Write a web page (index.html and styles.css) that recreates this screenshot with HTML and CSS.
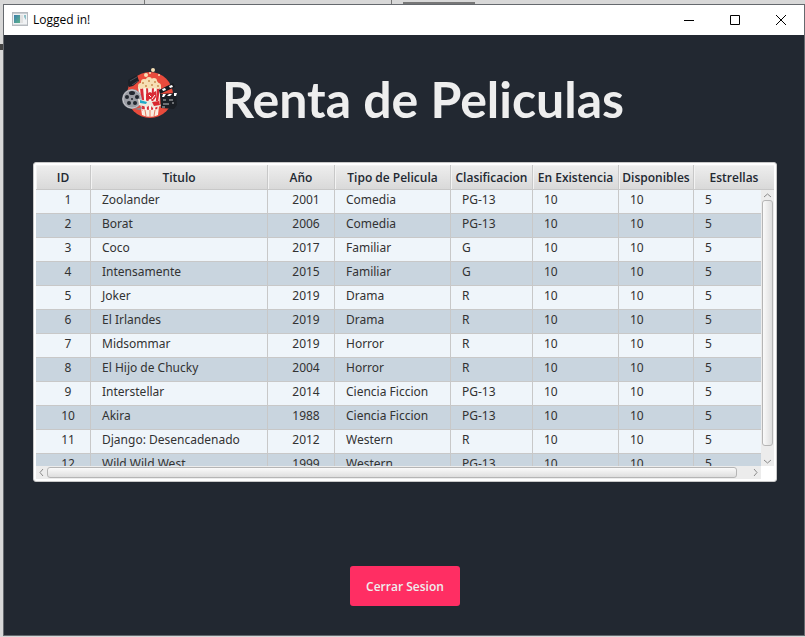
FILE: index.html
```html
<!DOCTYPE html>
<html lang="es">
<head>
<meta charset="utf-8">
<title>Logged in!</title>
<link rel="stylesheet" href="styles.css">
</head>
<body>
<div class="window">
  <header class="titlebar">
    <svg class="app-icon" width="16" height="14" viewBox="0 0 16 14" aria-hidden="true">
      <defs><linearGradient id="pane" x1="0" y1="0" x2="1" y2="1"><stop offset="0" stop-color="#3d7fae"/><stop offset="1" stop-color="#5db28a"/></linearGradient></defs>
      <rect x=".5" y=".5" width="15" height="13" fill="#f0f2f4" stroke="#b5babf"/>
      <rect x="1" y="1" width="14" height="1" fill="#c8ccd0"/>
      <rect x="2" y="3" width="6" height="8" fill="url(#pane)"/>
      <rect x="8" y="3" width="3" height="8" fill="#e1e1e1"/>
      <path d="M12 3h2v5l-2-3z" fill="#8fc0c8"/>
      <rect x="1" y="12" width="14" height="1" fill="#d5d8db"/>
    </svg>
    <span class="caption">Logged in!</span>
    <div class="window-buttons">
      <button type="button" aria-label="Minimizar"><svg width="12" height="12" viewBox="0 0 12 12"><path d="M1 6.500h10"/></svg></button>
      <button type="button" aria-label="Maximizar"><svg width="12" height="12" viewBox="0 0 12 12"><path d="M1.500 1.500h9v9h-9z"/></svg></button>
      <button type="button" aria-label="Cerrar"><svg width="12" height="12" viewBox="0 0 12 12"><path d="M1 1l10 10M11 1L1 11"/></svg></button>
    </div>
  </header>
  <main class="content">
    <div class="brand">
      <svg class="logo" width="56" height="52" viewBox="0 0 56 52" aria-hidden="true">
        <circle cx="28" cy="28" r="23" fill="#e84b3c"/>
        <path d="M6 13l9-5 2 6-6 5-4 1-1-4z" fill="#1b2027"/>
        <path d="M8 14l7-4M10 18l6-4" stroke="#4b5058"/>
        <path d="M16 20h23l-3 28q-8 3-16 0z" fill="#fbf6ee"/>
        <path d="M18 20h3l2 24h-3zM24 20h2l1 24h-2zM30 20h2l-1 24h-2zM35 20h3l-3 24h-2z" fill="#d92b36"/>
        <path d="M20 42l8 1 8-1-1 6q-7 3-14 0z" fill="#f8eee0"/>
        <path d="M23 43l1 6M28 43v7M33 43l-1 6" stroke="#e9785f"/>
        <g fill="#f6dfb5">
          <circle cx="19" cy="19" r="3"/><circle cx="22" cy="15" r="3"/><circle cx="27" cy="13" r="3"/><circle cx="32" cy="14" r="3"/><circle cx="36" cy="19" r="3"/><path d="M17 20q2-9 11-8t11 8q-11 3-22 0z"/>
          <circle cx="31" cy="3" r="2"/><circle cx="24" cy="8" r="2"/><circle cx="37" cy="8" r="1"/><circle cx="28" cy="6" r="1"/>
        </g>
        <g fill="#c98f52"><circle cx="21" cy="16" r="1"/><circle cx="27" cy="14" r="1"/><circle cx="33" cy="15" r="1"/><circle cx="30" cy="18" r="1"/><circle cx="24" cy="19" r="1"/><circle cx="36" cy="19" r="1"/></g>
        <path d="M24 27l4-2 2 1 4-2v6l-2 3-4-1-4 2z" fill="#d92b36"/>
        <path d="M27 28l2 2M33 28l-3 4" stroke="#fff"/>
        <circle cx="10" cy="32" r="10" fill="#9b9da4"/>
        <circle cx="10" cy="32" r="9" fill="none" stroke="#c5c6cb"/>
        <g fill="#22272f"><ellipse cx="10" cy="26" rx="3" ry="2"/><circle cx="15" cy="30" r="2"/><circle cx="13" cy="36" r="2"/><circle cx="7" cy="36" r="2"/><circle cx="5" cy="30" r="2"/><circle cx="10" cy="32" r="1"/></g>
        <path d="M12 42l9-2-3 3z" fill="#888a90"/>
        <path d="M16 32l10 2 11 0 2 5-8 2-3-3-3 2-8-2z" fill="#eee8dd"/>
        <path d="M18 33l7 2-1 2-6-1z" fill="#20a9c8"/>
        <path d="M30 35l7-1 1 4-6 1z" fill="#d9272e"/>
        <path d="M38 27l16-1 1 12-3 4-13-1z" fill="#1b1f25"/>
        <path d="M37 23l14-7 2 4-15 7z" fill="#171b20"/>
        <path d="M40 22l3-1 1 2-3 1zM47 19l3-1 1 2-3 1zM41 27h3l-2 3h-2zM47 27h3l-2 2h-3zM52 26h3l-1 3h-2z" fill="#fff"/>
        <path d="M41 33h3M47 33h4M41 37h6M40 40h3M50 36h2" stroke="#bfc1c3"/>
      </svg>
      <h1>Renta de Peliculas</h1>
    </div>
    <div class="table-card">
      <div class="table-view">
        <table>
          <colgroup><col class="c-id"><col><col class="c-year"><col class="c-type"><col class="c-class"><col class="c-stock"><col class="c-free"><col class="c-stars"></colgroup>
          <thead><tr><th>ID</th><th>Titulo</th><th>Año</th><th>Tipo de Pelicula</th><th>Clasificacion</th><th>En Existencia</th><th>Disponibles</th><th>Estrellas</th></tr></thead>
          <tbody>
            <tr><td>1</td><td>Zoolander</td><td>2001</td><td>Comedia</td><td>PG-13</td><td>10</td><td>10</td><td>5</td></tr>
            <tr><td>2</td><td>Borat</td><td>2006</td><td>Comedia</td><td>PG-13</td><td>10</td><td>10</td><td>5</td></tr>
            <tr><td>3</td><td>Coco</td><td>2017</td><td>Familiar</td><td>G</td><td>10</td><td>10</td><td>5</td></tr>
            <tr><td>4</td><td>Intensamente</td><td>2015</td><td>Familiar</td><td>G</td><td>10</td><td>10</td><td>5</td></tr>
            <tr><td>5</td><td>Joker</td><td>2019</td><td>Drama</td><td>R</td><td>10</td><td>10</td><td>5</td></tr>
            <tr><td>6</td><td>El Irlandes</td><td>2019</td><td>Drama</td><td>R</td><td>10</td><td>10</td><td>5</td></tr>
            <tr><td>7</td><td>Midsommar</td><td>2019</td><td>Horror</td><td>R</td><td>10</td><td>10</td><td>5</td></tr>
            <tr><td>8</td><td>El Hijo de Chucky</td><td>2004</td><td>Horror</td><td>R</td><td>10</td><td>10</td><td>5</td></tr>
            <tr><td>9</td><td>Interstellar</td><td>2014</td><td>Ciencia Ficcion</td><td>PG-13</td><td>10</td><td>10</td><td>5</td></tr>
            <tr><td>10</td><td>Akira</td><td>1988</td><td>Ciencia Ficcion</td><td>PG-13</td><td>10</td><td>10</td><td>5</td></tr>
            <tr><td>11</td><td>Django: Desencadenado</td><td>2012</td><td>Western</td><td>R</td><td>10</td><td>10</td><td>5</td></tr>
            <tr><td>12</td><td>Wild Wild West</td><td>1999</td><td>Western</td><td>PG-13</td><td>10</td><td>10</td><td>5</td></tr>
          </tbody>
        </table>
      </div>
      <div class="scroll vertical">
        <button type="button" aria-label="Subir"><svg width="9" height="9" viewBox="0 0 9 9"><path d="M1 6l3.500-3L8 6"/></svg></button>
        <div class="thumb"></div>
        <button type="button" aria-label="Bajar"><svg width="9" height="9" viewBox="0 0 9 9"><path d="M1 3l3.500 3L8 3"/></svg></button>
      </div>
      <div class="scroll horizontal">
        <button type="button" aria-label="Izquierda"><svg width="9" height="9" viewBox="0 0 9 9"><path d="M6 1L3 4.500 6 8"/></svg></button>
        <div class="thumb"></div>
        <button type="button" aria-label="Derecha"><svg width="9" height="9" viewBox="0 0 9 9"><path d="M3 1l3 3.500L3 8"/></svg></button>
      </div>
    </div>
    <button type="button" class="logout">Cerrar Sesion</button>
  </main>
</div>
</body>
</html>
```
FILE: styles.css
```css
* { box-sizing: border-box; }

body {
  margin: 0;
  min-height: 100vh;
  padding: 4px 0 1px 3px;
  display: flex;
  font-family: "Open Sans", "Noto Sans", sans-serif;
  font-size: 12px;
  background:
    linear-gradient(#777, #777) 144px 0 / 1px 4px no-repeat,
    linear-gradient(#777, #777) 391px 0 / 1px 4px no-repeat,
    linear-gradient(#777, #777) 403px 2px / 72px 2px no-repeat,
    linear-gradient(#444, #444) 0 44px / 3px 6px no-repeat,
    #d8d8d8;
}

button {
  margin: 0;
  padding: 0;
  border: 0;
  background: none;
  font: inherit;
}

.window {
  flex: 1;
  min-width: 0;
  display: flex;
  flex-direction: column;
  border: 1px solid #65696e;
  background: #222831;
}

.titlebar {
  height: 30px;
  padding-left: 8px;
  display: flex;
  align-items: center;
  background: #fff;
}

.app-icon { margin-bottom: 2px; }

.caption {
  margin-left: 5px;
  line-height: 16px;
  color: #000;
}

.window-buttons {
  margin-left: auto;
  height: 100%;
  display: flex;
}

.window-buttons button {
  width: 46px;
  display: grid;
  place-items: center;
}

.window-buttons svg {
  fill: none;
  stroke: #000;
}

.content {
  flex: 1;
  padding: 32px 27px 29px 29px;
  display: flex;
  flex-direction: column;
}

.brand {
  padding-left: 89px;
  display: flex;
  align-items: flex-start;
  gap: 44px;
}

h1 {
  margin: 0;
  font-family: Lato, "Open Sans", sans-serif;
  font-size: 50px;
  line-height: 64px;
  font-weight: 700;
  color: #eee;
}

.table-card {
  margin-top: 31px;
  padding: 2px;
  display: grid;
  grid-template-columns: minmax(0, 1fr) 13px;
  grid-template-rows: 25px 276px 13px;
  border: 1px solid #c8c8c8;
  border-radius: 3px;
  background: #fff;
}

.table-view {
  grid-area: 1 / 1 / 3 / 3;
  overflow: hidden;
}

table {
  width: 100%;
  table-layout: fixed;
  border-collapse: separate;
  border-spacing: 0;
  color: #323232;
}

.c-id { width: 55px; }
.c-year { width: 67px; }
.c-type { width: 116px; }
.c-class { width: 82px; }
.c-stock { width: 86px; }
.c-free { width: 75px; }
.c-stars { width: 80px; }

th, td {
  border-right: 1px solid #c8c8c8;
  border-bottom: 1px solid #c8c8c8;
  white-space: nowrap;
}

th {
  height: 25px;
  padding: 1px 0 0;
  line-height: 16px;
  font-weight: 600;
  color: #222831;
  background: linear-gradient(#eee, #d9d9d9);
  box-shadow: inset 1px 1px #f3f3f3;
}

th:last-child { border-right: 0; }

td {
  height: 24px;
  padding: 0 11px 3px;
  font-family: "Noto Sans", "Open Sans", sans-serif;
  line-height: 18px;
}

td:first-child, td:nth-child(3) {
  padding: 0 0 3px 10px;
  text-align: center;
}

tbody tr:nth-child(odd) { background: #eff5fa; }
tbody tr:nth-child(even) { background: #c9d5df; }

.scroll {
  display: flex;
  z-index: 1;
  background: #ececec;
}

.scroll button {
  display: grid;
  place-items: center;
}

.scroll svg {
  fill: none;
  stroke: #8a8a8a;
}

.thumb {
  border: 1px solid #b5b5b5;
  border-radius: 3px;
}

.vertical {
  grid-area: 2 / 2;
  flex-direction: column;
  padding: 0 1px;
}

.vertical button { height: 10px; }

.vertical .thumb {
  flex: 1;
  margin-bottom: 10px;
  background: linear-gradient(90deg, #fafafa, #dedede);
}

.horizontal {
  grid-area: 3 / 1;
  padding: 1px 0;
}

.horizontal button { width: 11px; }

.horizontal .thumb {
  flex: 1;
  margin-right: 13px;
  background: linear-gradient(#fafafa, #dedede);
}

.logout {
  margin: auto auto 0;
  width: 110px;
  height: 40px;
  border-radius: 3px;
  font-weight: 600;
  color: #eee;
  background: #ff2e63;
}
```
